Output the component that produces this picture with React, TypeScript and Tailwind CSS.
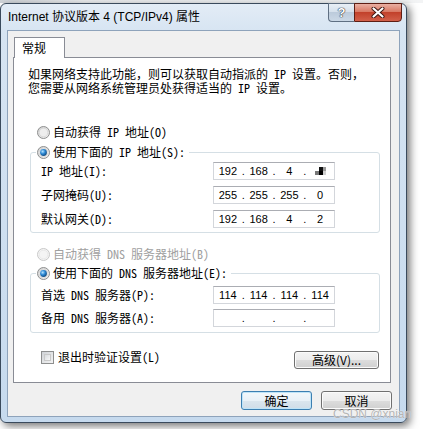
import React from "react";

const bodyFont =
  "font-['Noto_Sans_Mono_CJK_SC','Noto_Sans_CJK_SC',sans-serif] text-[12px] leading-[16px]";
const paraFont =
  "font-['Noto_Sans_Mono_CJK_SC','Noto_Sans_CJK_SC',sans-serif] text-[12px] leading-[14px] whitespace-nowrap";

function Radio({ checked, disabled }: { checked?: boolean; disabled?: boolean }) {
  return (
    <svg width="13" height="13" viewBox="0 0 13 13" className="shrink-0">
      <defs>
        <linearGradient id="rgOuter" x1="0" y1="0" x2="1" y2="1">
          <stop offset="0" stopColor="#d0d0d0" />
          <stop offset="1" stopColor="#f6f6f6" />
        </linearGradient>
        <radialGradient id="rgDot" cx="0.38" cy="0.35" r="0.75">
          <stop offset="0" stopColor="#b6e3ff" />
          <stop offset="0.45" stopColor="#2d8ad6" />
          <stop offset="1" stopColor="#0b3c6c" />
        </radialGradient>
      </defs>
      <circle
        cx="6.5"
        cy="6.5"
        r="6"
        fill={disabled ? "#f4f4f4" : "url(#rgOuter)"}
        stroke={disabled ? "#c8c8c8" : "#8e8f8f"}
      />
      <circle
        cx="6.5"
        cy="6.5"
        r="4.3"
        fill={disabled ? "#f4f4f4" : "#eeeeee"}
        stroke={disabled ? "#e0e0e0" : "#cfcfcf"}
        strokeWidth="0.6"
      />
      {checked && <circle cx="6.5" cy="6.5" r="3.4" fill="url(#rgDot)" />}
    </svg>
  );
}

function IpBox({ parts, mosaic }: { parts: string[]; mosaic?: boolean }) {
  return (
    <div className="w-[122px] h-[18px] bg-white border border-[#d3d6db] border-t-[#abadb3] flex items-center font-['Liberation_Sans',sans-serif] text-[11px] leading-none text-black">
      {parts.map((p, i) => (
        <React.Fragment key={i}>
          <span className="flex-1 flex justify-center">
            {i === 3 && mosaic ? (
              <svg width="12" height="9" viewBox="0 0 12 9">
                <rect x="5" y="0" width="4" height="4" fill="#111" />
                <rect x="9" y="0" width="3" height="4" fill="#9a9a9a" />
                <rect x="1" y="4" width="4" height="4" fill="#777" />
                <rect x="5" y="4" width="4" height="4" fill="#000" />
                <rect x="9" y="4" width="3" height="4" fill="#cfcfcf" />
              </svg>
            ) : (
              p
            )}
          </span>
          {i < 3 && <span className="w-[3px]">.</span>}
        </React.Fragment>
      ))}
    </div>
  );
}

function Btn({
  children,
  className,
  isDefault,
}: {
  children: React.ReactNode;
  className?: string;
  isDefault?: boolean;
}) {
  return (
    <div
      className={
        "flex items-center justify-center rounded-[3px] border font-['Noto_Sans_CJK_SC',sans-serif] text-[12px] leading-none text-black " +
        (isDefault
          ? "border-[#3c7fb1] bg-[linear-gradient(#f3f8fb_0%,#e9f1f7_50%,#dbe6ee_50%,#d0dde8_100%)] shadow-[inset_0_0_0_1px_#bfe4f8] "
          : "border-[#707070] bg-[linear-gradient(#f4f4f4_0%,#ececec_50%,#dddddd_50%,#d0d0d0_100%)] shadow-[inset_0_0_0_1px_#fbfbfb] ") +
        (className || "")
      }
    >
      {children}
    </div>
  );
}

function Row({ label, parts, mosaic }: { label: string; parts: string[]; mosaic?: boolean }) {
  return (
    <div className="grid grid-cols-[172px_122px] items-center pl-[10px] h-[18px]">
      <span className={bodyFont + " text-black whitespace-pre"}>{label}</span>
      <IpBox parts={parts} mosaic={mosaic} />
    </div>
  );
}

export default function App() {
  return (
    <div className="w-[423px] h-[429px] overflow-hidden bg-white relative">
      <div className="h-[3px] bg-[linear-gradient(90deg,#cfd3d8_0%,#eceef0_20%,#f3f4f5_100%)]" />
      <div className="w-[407px] h-[420px] rounded-[6px] border border-[#3a4a5c] bg-[linear-gradient(180deg,#e3ecf6_0%,#d6e4f2_7%,#c6daee_100%)] shadow-[3px_3px_9px_rgba(0,0,0,0.55)] flex flex-col px-[6px] pb-[5px]">
        {/* title bar */}
        <div className="h-[26px] flex items-start shrink-0">
          <div className="self-center pl-[1px] font-['Liberation_Sans','Noto_Sans_CJK_SC',sans-serif] text-[12px] leading-none text-black">
            Internet 协议版本 4 (TCP/IPv4) 属性
          </div>
          <div className="ml-auto -mr-[2px] -mt-[1px] flex">
            <div className="w-[26px] h-[19px] rounded-bl-[4px] border border-r-0 border-[#5f6f82] bg-[linear-gradient(#e9eff6_0%,#d6e1ec_45%,#bccbdb_50%,#cbd8e6_100%)] flex items-center justify-center">
              <span className="font-['Liberation_Sans',sans-serif] font-bold text-[13px] leading-none text-white [text-shadow:0_0_1px_#2b3440,0_0_1px_#2b3440,0_0_1px_#2b3440]">
                ?
              </span>
            </div>
            <div className="w-[48px] h-[19px] rounded-br-[4px] border border-[#5e1e14] bg-[linear-gradient(#eab0a3_0%,#d97a65_45%,#c2412b_50%,#d2604a_100%)] flex items-center justify-center">
              <svg width="14" height="11" viewBox="0 0 14 11">
                <path d="M2.5 1.5 L11.5 9.5 M11.5 1.5 L2.5 9.5" stroke="#3b1510" strokeWidth="4" strokeLinecap="round" />
                <path d="M2.5 1.5 L11.5 9.5 M11.5 1.5 L2.5 9.5" stroke="#ffffff" strokeWidth="2.2" strokeLinecap="round" />
              </svg>
            </div>
          </div>
        </div>

        {/* client */}
        <div className="flex-1 bg-[#f0f0f0] border border-[#8ea3bb] flex flex-col pt-[6px] pl-[5px] pr-[8px]">
          <div className="flex">
            <div className="ml-[1px] w-[51px] h-[21px] -mb-[1px] relative z-10 bg-white border border-b-0 border-[#898c95] pl-[7px] flex items-center font-['Noto_Sans_CJK_SC',sans-serif] text-[12px] leading-none text-black">
              常规
            </div>
          </div>
          <div className="h-[326px] bg-white border border-[#898c95] flex flex-col">
            <div className="pl-[14px] pt-[9px] text-black flex flex-col">
              <div className={paraFont}>如果网络支持此功能，则可以获取自动指派的 IP 设置。否则，</div>
              <div className={paraFont}>您需要从网络系统管理员处获得适当的 IP 设置。</div>
            </div>

            <div className="mt-[29px] ml-[23px] h-[16px] flex items-center gap-[3px]">
              <Radio />
              <span className={bodyFont + " text-black"}>自动获得 IP 地址(O)</span>
            </div>

            <div className="mt-[12px] ml-[16px] mr-[10px] border border-[#d5dfe5] rounded-[3px] flex flex-col pb-[4px]">
              <div className="-mt-[9px] ml-[5px] self-start h-[16px] bg-white px-[1px] pr-[4px] flex items-center gap-[3px]">
                <Radio checked />
                <span className={bodyFont + " text-black"}>使用下面的 IP 地址(S):</span>
              </div>
              <div className="mt-[2px] flex flex-col gap-[6px]">
                <Row label="IP 地址(I):" parts={["192", "168", "4", ""]} mosaic />
                <Row label="子网掩码(U):" parts={["255", "255", "255", "0"]} />
                <Row label="默认网关(D):" parts={["192", "168", "4", "2"]} />
              </div>
            </div>

            <div className="mt-[13px] ml-[23px] h-[16px] flex items-center gap-[3px]">
              <Radio disabled />
              <span className={bodyFont + " text-[#a0a0a0]"}>自动获得 DNS 服务器地址(B)</span>
            </div>

            <div className="mt-[11px] ml-[16px] mr-[10px] border border-[#d5dfe5] rounded-[3px] flex flex-col pb-[5px]">
              <div className="-mt-[9px] ml-[5px] self-start h-[16px] bg-white px-[1px] pr-[4px] flex items-center gap-[3px]">
                <Radio checked />
                <span className={bodyFont + " text-black"}>使用下面的 DNS 服务器地址(E):</span>
              </div>
              <div className="mt-[5px] flex flex-col gap-[5px]">
                <Row label="首选 DNS 服务器(P):" parts={["114", "114", "114", "114"]} />
                <Row label="备用 DNS 服务器(A):" parts={["", "", "", ""]} />
              </div>
            </div>

            <div className="mt-[16px] ml-[27px] mr-[11px] flex items-start justify-between">
              <div className="h-[16px] flex items-center gap-[4px]">
                <div className="w-[13px] h-[13px] border border-[#8e8f8f] bg-[linear-gradient(135deg,#cfd2d6_0%,#f4f4f4_100%)] p-[2px]">
                  <div className="w-full h-full bg-[linear-gradient(135deg,#d9dcdf_0%,#f7f7f7_100%)] border border-[#c9c9c9]" />
                </div>
                <span className={bodyFont + " text-black"}>退出时验证设置(L)</span>
              </div>
              <Btn className="mt-[2px] w-[85px] h-[18px]">高级(V)...</Btn>
            </div>
          </div>

          <div className="mt-[8px] flex justify-end gap-[9px] -mr-[1px]">
            <Btn isDefault className="w-[71px] h-[19px]">
              确定
            </Btn>
            <Btn className="w-[71px] h-[19px]">取消</Btn>
          </div>
        </div>
      </div>
      <div className="absolute left-[333px] top-[408px] font-['Liberation_Sans',sans-serif] text-[12px] leading-none text-[#b4b4b4] [text-shadow:0_0_1px_#ffffff]">
        CSDN @xnian
      </div>
    </div>
  );
}
